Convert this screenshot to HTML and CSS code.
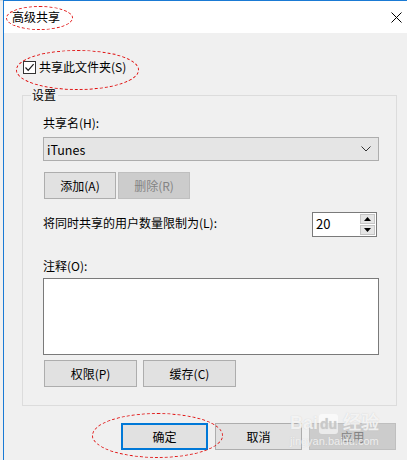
FILE: index.html
```html
<!DOCTYPE html>
<html lang="zh-CN">
<head>
<meta charset="utf-8">
<title>高级共享</title>
<link rel="stylesheet" href="styles.css">
</head>
<body>
<div class="screen">
  <div class="behind"></div>
  <div class="window">
    <div class="titlebar">
      <span class="title">高级共享</span>
      <svg class="close" width="11" height="11" viewBox="0 0 11 11"><path d="M0.5 0.5L10.5 10.5M10.5 0.5L0.5 10.5" stroke="#000" stroke-width="1" fill="none"/></svg>
    </div>
    <div class="content">
      <label class="check-row">
        <span class="checkbox"><svg width="11" height="11" viewBox="0 0 11 11"><path d="M1.5 5.5L4.2 8.3L9.6 2.2" stroke="#1a1a1a" stroke-width="1.2" fill="none"/></svg></span>
        <span>共享此文件夹(S)</span>
      </label>
      <fieldset class="group">
        <legend class="legend">设置</legend>
        <div class="group-body">
          <div class="label first">共享名(H):</div>
          <div class="combo">
            <span>iTunes</span>
            <svg width="10" height="6" viewBox="0 0 10 6"><path d="M0.5 0.5L5 5L9.5 0.5" stroke="#333" stroke-width="1" fill="none"/></svg>
          </div>
          <div class="btn-row">
            <button class="btn small">添加(A)</button>
            <button class="btn small disabled">删除(R)</button>
          </div>
          <div class="spin-row">
            <span class="label">将同时共享的用户数量限制为(L):</span>
            <div class="spin">
              <span class="spin-value">20</span>
              <div class="spin-btns">
                <span class="spin-btn"><svg width="7" height="4" viewBox="0 0 7 4"><path d="M0 4L3.5 0L7 4Z" fill="#000"/></svg></span>
                <span class="spin-btn"><svg width="7" height="4" viewBox="0 0 7 4"><path d="M0 0L3.5 4L7 0Z" fill="#000"/></svg></span>
              </div>
            </div>
          </div>
          <div class="label note-label">注释(O):</div>
          <div class="textarea"></div>
          <div class="btn-row lower">
            <button class="btn wide">权限(P)</button>
            <button class="btn wide">缓存(C)</button>
          </div>
        </div>
      </fieldset>
      <div class="footer">
        <button class="btn dlg default">确定</button>
        <button class="btn dlg">取消</button>
        <button class="btn dlg disabled">应用</button>
      </div>
    </div>
  </div>
  <div class="ring ring-title"></div>
  <div class="ring ring-check"></div>
  <div class="ring ring-ok"></div>
  <div class="watermark">
    <div class="wm-top">Bai<span class="wm-du">du</span> 经验</div>
    <div class="wm-bottom">jingyan.baidu.com</div>
  </div>
</div>
</body>
</html>
```

FILE: styles.css
```css
* { box-sizing: border-box; }
html, body { margin: 0; padding: 0; }
body {
  width: 407px;
  height: 460px;
  overflow: hidden;
  background: #f0f0f0;
  font-family: "Noto Sans CJK SC", "Noto Sans", sans-serif;
  font-size: 12px;
  color: #000;
}
.screen {
  position: relative;
  display: flex;
  width: 407px;
  height: 460px;
}
.behind {
  width: 3px;
  flex: none;
  background: #f0f0f0;
  border-top: 1px solid #dcdcdc;
}
.window {
  flex: 1;
  border-left: 1px solid #1a7ad4;
  border-top: 1px solid #1a7ad4;
  background: #f0f0f0;
  display: flex;
  flex-direction: column;
}
.titlebar {
  height: 32px;
  background: #fff;
  display: flex;
  align-items: center;
  justify-content: space-between;
  padding: 0 5px 0 8px;
}
.title { line-height: 16px; }
.close { display: block; }
.content {
  padding: 24px 10px 0 18px;
}
.check-row {
  display: flex;
  align-items: center;
  height: 20px;
  padding-left: 1px;
  gap: 3px;
  line-height: 16px;
}
.checkbox {
  width: 13px;
  height: 13px;
  border: 1px solid #333;
  background: #fff;
  display: flex;
  align-items: center;
  justify-content: center;
}
.checkbox svg { display: block; }
.group {
  margin: 10px 0 0 0;
  padding: 0 17px 18px 20px;
  border: 1px solid #dcdcdc;
  min-width: 0;
}
.legend {
  margin-left: -12px;
  padding: 0 2px 0 1px;
  line-height: 16px;
  height: 16px;
}
.label { line-height: 16px; }
.label.first { margin-top: 12px; }
.combo {
  margin-top: 6px;
  height: 24px;
  border: 1px solid #adadad;
  background: #e5e5e5;
  display: flex;
  align-items: center;
  justify-content: space-between;
  padding: 0 7px 0 3px;
  font-size: 12.5px;
}
.combo svg { display: block; }
.btn-row {
  display: flex;
  gap: 2px;
  margin-top: 11px;
}
.btn {
  font: inherit;
  color: #000;
  background: #e1e1e1;
  border: 1px solid #adadad;
  padding: 0;
  height: 27px;
  line-height: 16px;
  margin: 0;
}
.btn.small { width: 72px; margin-left: 1px; }
.btn.small + .btn.small { margin-left: 0; }
.btn.disabled {
  background: #cccccc;
  border-color: #bfbfbf;
  color: #838383;
}
.spin-row {
  margin-top: 13px;
  display: flex;
  align-items: center;
  justify-content: space-between;
  padding-right: 2px;
}
.spin-row .label { margin-top: -3px; }
.spin {
  width: 65px;
  height: 25px;
  border: 1px solid #7a7a7a;
  background: #fff;
  display: flex;
  align-items: center;
  justify-content: space-between;
  padding: 0 1px 0 3px;
}
.spin-value { font-size: 13px; line-height: 16px; margin-top: -2px; }
.spin-btns {
  display: flex;
  flex-direction: column;
  gap: 1px;
  height: 21px;
}
.spin-btn {
  width: 15px;
  height: 10px;
  background: #e5e5e5;
  border: 1px solid #c5c5c5;
  display: flex;
  align-items: center;
  justify-content: center;
}
.spin-btn svg { display: block; }
.note-label { margin-top: 21px; }
.textarea {
  margin-top: 4px;
  height: 77px;
  border: 1px solid #7a7a7a;
  background: #fff;
}
.btn-row.lower {
  margin-top: 5px;
  gap: 6px;
}
.btn.wide { width: 93px; margin-left: 1px; }
.btn.wide + .btn.wide { margin-left: 0; }
.footer {
  margin-top: 17px;
  display: flex;
  gap: 7px;
  padding-left: 99px;
}
.btn.dlg { width: 87px; }
.btn.default { border: 2px solid #0078d7; }
.ring {
  position: absolute;
  border: 1px dashed #e01010;
  border-radius: 50%;
  pointer-events: none;
}
.ring-title { left: 6px; top: 6px; width: 67px; height: 24px; }
.ring-check { left: 16px; top: 50px; width: 123px; height: 40px; }
.ring-ok { left: 92px; top: 413px; width: 131px; height: 45px; }
.watermark {
  position: absolute;
  left: 290px;
  top: 413px;
  color: rgba(255, 255, 255, 0.75);
  font-family: "Liberation Sans", sans-serif;
  pointer-events: none;
  text-shadow: 0 0 1px rgba(180, 180, 180, 0.6);
}
.wm-top { font-size: 18px; font-weight: bold; line-height: 20px; }
.wm-du {
  display: inline-block;
  background: rgba(255, 255, 255, 0.6);
  color: rgba(200, 200, 200, 0.9);
  border-radius: 3px;
  font-size: 14px;
  padding: 0 1px;
  margin-left: 1px;
}
.wm-bottom { font-size: 11px; line-height: 14px; }
```
